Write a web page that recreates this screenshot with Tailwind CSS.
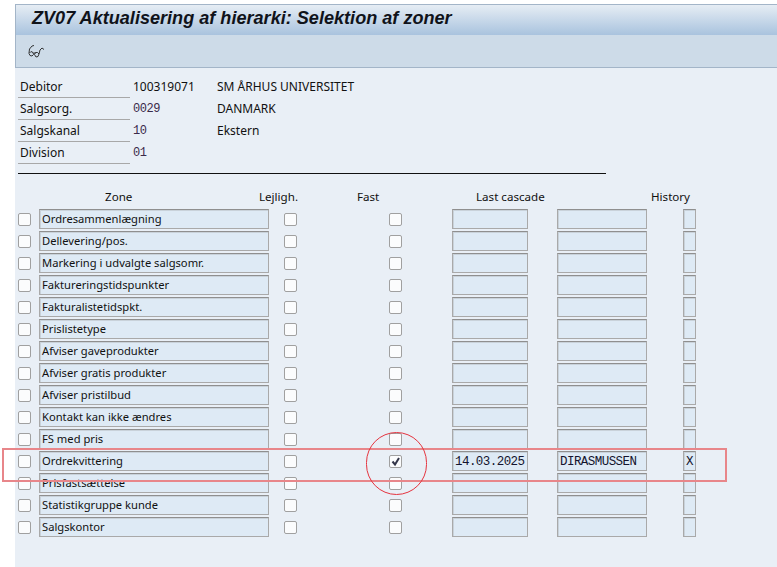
<!DOCTYPE html>
<html lang="da">
<head>
  <meta charset="UTF-8">
  <title>ZV07 Aktualisering af hierarki</title>
  <script src="https://cdn.jsdelivr.net/npm/@tailwindcss/browser@4"></script>
</head>
<body class="bg-white w-[777px] h-[567px] overflow-hidden font-['Noto_Sans',sans-serif] text-[12px] text-[#111]">
  <div class="relative ml-[15px] mt-[4px] h-[563px] bg-[#e9eff6]">
    <!-- header -->
    <div class="h-[31px] pl-[16px] pb-[3px] flex items-center bg-gradient-to-b from-[#e6edf4] to-[#a9c3de] border-t border-l border-[#a3b5c8] border-b-[#c5d6e6]">
      <h1 class="font-['Liberation_Sans',sans-serif] font-bold italic text-[18.1px] text-[#10131a] whitespace-nowrap">ZV07 Aktualisering af hierarki: Selektion af zoner</h1>
    </div>
    <div class="h-[33px] pl-[11px] flex items-center bg-[#cddbe8] border-l border-b border-[#a3b5c8]">
      <svg width="18" height="14" viewBox="0 0 18 14" fill="none" stroke="#222" stroke-width="0.9">
        <path d="M4 7.5 2 9.5 3 11.5 5 12 6.5 10.5 6 8.5 4 7.5Z"/><path d="M8.5 8.5 7.5 10.5 9 13 11 12.5 12 10 10.5 8.5Z"/>
        <path d="M6.5 9 8.5 9M2 9 2.5 5 5 2 7 1.5M12 10 13 6 15 4 17 5.5"/>
      </svg>
    </div>

    <!-- header data -->
    <div class="pt-[9px] pl-[3px]">
      <div class="flex h-[22px]"><span class="w-[112px] pl-[2px] leading-[22px] -mt-px h-[22px] border-b border-[#a8a8a8]">Debitor</span><span class="w-[87px] pl-[3px] leading-[19px]">100319071</span><span class="leading-[19px]">SM ÅRHUS UNIVERSITET</span></div>
      <div class="flex h-[22px]"><span class="w-[112px] pl-[2px] leading-[22px] -mt-px h-[22px] border-b border-[#a8a8a8]">Salgsorg.</span><span class="w-[87px] pl-[3px] leading-[21px] font-['Liberation_Mono',monospace] text-[12px] tracking-[-0.45px] text-[#3a2a4a]">0029</span><span class="leading-[19px]">DANMARK</span></div>
      <div class="flex h-[22px]"><span class="w-[112px] pl-[2px] leading-[22px] -mt-px h-[22px] border-b border-[#a8a8a8]">Salgskanal</span><span class="w-[87px] pl-[3px] leading-[21px] font-['Liberation_Mono',monospace] text-[12px] tracking-[-0.45px] text-[#3a2a4a]">10</span><span class="leading-[19px]">Ekstern</span></div>
      <div class="flex h-[22px]"><span class="w-[112px] pl-[2px] leading-[22px] -mt-px h-[22px] border-b border-[#a8a8a8]">Division</span><span class="w-[87px] pl-[3px] leading-[21px] font-['Liberation_Mono',monospace] text-[12px] tracking-[-0.45px] text-[#3a2a4a]">01</span></div>
    </div>
    <div class="mt-[8px] ml-[3px] w-[588px] h-px bg-[#111]"></div>

    <!-- table head -->
    <div class="relative mt-[12px] h-[22px] leading-[22px] text-[11.6px]">
      <span class="absolute left-[90px]">Zone</span>
      <span class="absolute left-[244px]">Lejligh.</span>
      <span class="absolute left-[342px]">Fast</span>
      <span class="absolute left-[461px]">Last cascade</span>
      <span class="absolute left-[636px]">History</span>
    </div>
    <div id="rows"></div>

    <!-- markup drawn on the screenshot -->
    <div class="absolute left-[-13px] top-[444px] w-[725px] h-[34px] border-2 border-[#e8868a]"></div>
    <div class="absolute left-[351px] top-[428px] w-[61px] h-[63px] rounded-full border border-[#e5343f]"></div>
  </div>

  <script>
    const zones = ['Ordresammenlægning', 'Dellevering/pos.', 'Markering i udvalgte salgsomr.', 'Faktureringstidspunkter', 'Fakturalistetidspkt.', 'Prislistetype', 'Afviser gaveprodukter', 'Afviser gratis produkter', 'Afviser pristilbud', 'Kontakt kan ikke ændres', 'FS med pris', 'Ordrekvittering', 'Prisfastsættelse', 'Statistikgruppe kunde', 'Salgskontor'];
    const box = (cls, inner = '') => `<span class="${cls} block w-[13px] h-[13px] shrink-0 rounded-[2px] bg-[#fbfcfd] border border-[#a0a0a0]">${inner}</span>`;
    const field = (cls, text = '') => `<span class="${cls} block h-[20px] shrink-0 px-[2px] leading-[17px] text-[11.2px] bg-[#deeaf5] border border-[#a9a9a9] border-t-[#8f8f8f] shadow-[inset_1px_1px_0_#c9d2da] whitespace-nowrap overflow-hidden">${text}</span>`;
    const check = '<svg width="11" height="11" viewBox="0 0 11 11" fill="none" stroke="#33364a" stroke-width="2"><path d="M2.5 5.5 5 8.5 9 2"/></svg>';
    const mono = t => `<span class="font-['Liberation_Mono',monospace] text-[12.5px] tracking-[-0.55px] text-[#14142e]">${t}</span>`;

    document.getElementById('rows').innerHTML = zones.map((z, i) => {
      const on = z === 'Ordrekvittering';
      return `<div class="flex items-center h-[22px] pl-[3px]">
        ${box('')}
        ${field('ml-[8px] w-[230px]', z)}
        ${box('ml-[15px]')}
        ${box('ml-[92px]', on ? check : '')}
        ${field('ml-[50px] w-[76px]', on ? mono('14.03.2025') : '')}
        ${field('ml-[29px] w-[90px]', on ? mono('DIRASMUSSEN') : '')}
        ${field('ml-[36px] w-[13px] text-center !px-0', on ? mono('X') : '')}
      </div>`;
    }).join('');
  </script>
</body>
</html>
